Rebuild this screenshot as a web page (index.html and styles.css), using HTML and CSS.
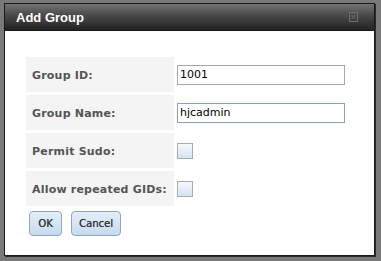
FILE: index.html
```html
<!DOCTYPE html>
<html>
<head>
<meta charset="utf-8">
<link rel="stylesheet" href="styles.css">
</head>
<body>
<div class="dialog">
  <div class="titlebar">
    <span class="title">Add Group</span>
    <svg class="close" width="9" height="10" viewBox="0 0 9 10">
      <rect x="0.5" y="0.5" width="8" height="9" fill="none" stroke="#6e6e6e"/>
      <path d="M2.5 3 L6.5 7 M6.5 3 L2.5 7" stroke="#6e6e6e" stroke-width="1"/>
    </svg>
  </div>
  <div class="content">
    <div class="form">
      <div class="label">Group ID:</div>
      <div class="value"><input class="field" type="text" value="1001"></div>
      <div class="label">Group Name:</div>
      <div class="value"><input class="field focused" type="text" value="hjcadmin"></div>
      <div class="label">Permit Sudo:</div>
      <div class="value"><span class="check"></span></div>
      <div class="label">Allow repeated GIDs:</div>
      <div class="value"><span class="check"></span></div>
    </div>
    <div class="buttons">
      <button class="btn btn-ok">OK</button>
      <button class="btn btn-cancel">Cancel</button>
    </div>
  </div>
</div>
</body>
</html>
```
FILE: styles.css
```css
html, body {
  margin: 0;
  padding: 0;
}
body {
  width: 381px;
  height: 261px;
  overflow: hidden;
  background: #797979;
  padding: 3px 0 0 4px;
  box-sizing: border-box;
}
.dialog {
  width: 371px;
  height: 253px;
  box-sizing: border-box;
  border: 1px solid #1a1a1a;
  box-shadow: 1px 1px 0 #2a2a2a;
  background: #fff;
}
.titlebar {
  height: 27px;
  box-sizing: border-box;
  background: linear-gradient(#747474, #4c4c4c 40%, #222 100%);
  border-bottom: 1px solid #1a1a1a;
  display: flex;
  align-items: center;
  justify-content: space-between;
  padding: 0 16px 0 11px;
}
.title {
  font-family: "Liberation Sans", Arial, sans-serif;
  font-weight: bold;
  font-size: 13px;
  color: #fff;
  padding-top: 1px;
}
.close {
  display: block;
}
.content {
  padding: 26px 0 0 21px;
}
.form {
  display: grid;
  grid-template-columns: 148px 176px;
  grid-auto-rows: 35px;
  row-gap: 3px;
  column-gap: 3px;
}
.label {
  background: #f4f4f4;
  display: flex;
  align-items: center;
  padding-left: 6px;
  padding-top: 2px;
  font-family: "DejaVu Sans", Verdana, sans-serif;
  font-weight: bold;
  font-size: 11px;
  letter-spacing: 0.2px;
  color: #555;
}
.value {
  display: flex;
  align-items: center;
}
.field {
  width: 168px;
  height: 20px;
  box-sizing: border-box;
  margin: 0;
  border: 1px solid #a8a8a8;
  padding: 0 2px;
  font-family: "DejaVu Sans", Verdana, sans-serif;
  font-size: 11px;
  color: #000;
  background: #fff;
  outline: none;
}
.field.focused {
  border-color: #7fa8bd;
}
.check {
  width: 16px;
  height: 16px;
  box-sizing: border-box;
  border: 1px solid #ababab;
  background: linear-gradient(#f6f9fd, #d4e3f4);
}
.buttons {
  display: flex;
  gap: 9px;
  margin-top: 5px;
  padding-left: 3px;
}
.btn {
  height: 25px;
  box-sizing: border-box;
  margin: 0;
  padding: 0;
  border: 1px solid #8ea8c3;
  border-radius: 4px;
  background: linear-gradient(#e4eefa, #c6daef);
  font-family: "DejaVu Sans", Verdana, sans-serif;
  font-size: 10px;
  color: #333;
  text-shadow: 0.3px 0 0 #555;
}
.btn-ok {
  width: 33px;
}
.btn-cancel {
  width: 50px;
}
```
